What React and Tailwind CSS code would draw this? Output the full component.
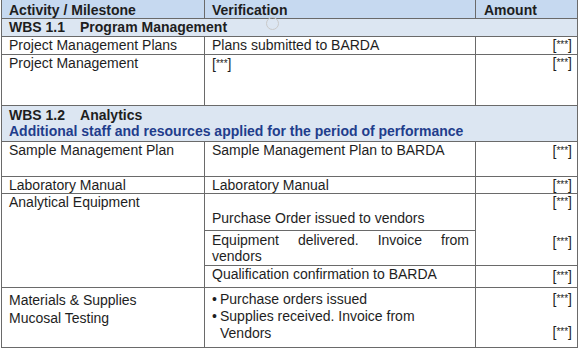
const line = "border-[#6a6a6a]";

function Stars() {
  return (
    <span>
      [<span className="relative -top-[2px] text-[10px]">***</span>]
    </span>
  );
}

function Cell({ className = "", children }) {
  return (
    <div className={`border-r border-b ${line} px-[7px] ${className}`}>
      {children}
    </div>
  );
}

function Amount({ className = "", children }) {
  return (
    <div className={`border-r border-b ${line} pr-[5px] text-right ${className}`}>
      {children}
    </div>
  );
}

export default function App() {
  return (
    <div className="relative h-[350px] w-[579px] overflow-hidden bg-white font-['Liberation_Sans',Arial,sans-serif] text-[14px] leading-[17px] text-[#1e1e1e]">
      <div
        className={`ml-px grid grid-cols-[203px_271px_102px] grid-rows-[19px_18px_18px_51px_36px_35px_17px_37px_35px_22px_60px] border-l ${line}`}
      >
        {/* header */}
        <Cell className="bg-[#c6d9f0] pt-[2px] font-bold">Activity / Milestone</Cell>
        <Cell className="bg-[#c6d9f0] pt-[2px] font-bold">Verification</Cell>
        <div className={`border-r border-b ${line} bg-[#c6d9f0] pl-[8px] pt-[2px] font-bold`}>
          Amount
        </div>

        {/* WBS 1.1 */}
        <Cell className="col-span-3 bg-[#dce6f2] font-bold">
          WBS 1.1<span className="ml-[15px]">Program Management</span>
        </Cell>

        <Cell>Project Management Plans</Cell>
        <Cell>Plans submitted to BARDA</Cell>
        <Amount>
          <Stars />
        </Amount>

        <Cell>Project Management</Cell>
        <Cell className="pt-[1px]">
          <Stars />
        </Cell>
        <Amount>
          <Stars />
        </Amount>

        {/* WBS 1.2 */}
        <Cell className="col-span-3 bg-[#dce6f2] pt-[1px] font-bold leading-[16px]">
          <div>
            WBS 1.2<span className="ml-[15px]">Analytics</span>
          </div>
          <div className="text-[#1f3d8c]">
            Additional staff and resources applied for the period of performance
          </div>
        </Cell>

        <Cell>Sample Management Plan</Cell>
        <Cell>Sample Management Plan to BARDA</Cell>
        <Amount className="pt-[1px]">
          <Stars />
        </Amount>

        <Cell>Laboratory Manual</Cell>
        <Cell>Laboratory Manual</Cell>
        <Amount>
          <Stars />
        </Amount>

        {/* Analytical equipment */}
        <Cell className="row-span-3">Analytical Equipment</Cell>
        <Cell className="pt-[16px]">Purchase Order issued to vendors</Cell>
        <Amount className="row-span-2">
          <div>
            <Stars />
          </div>
          <div className="mt-[22px]">
            <Stars />
          </div>
        </Amount>
        <Cell className="pt-[1px] pr-[6px] text-justify leading-[16px]">
          Equipment delivered. Invoice from vendors
        </Cell>
        <Cell>Qualification confirmation to BARDA</Cell>
        <Amount className="pt-[2px]">
          <Stars />
        </Amount>

        {/* Materials */}
        <Cell className="pt-[3px] leading-[18px]">
          <div>Materials &amp; Supplies</div>
          <div>Mucosal Testing</div>
        </Cell>
        <Cell className="pt-[3px]">
          <div className="flex">
            <span className="w-[8px] shrink-0">•</span>
            <span>Purchase orders issued</span>
          </div>
          <div className="flex">
            <span className="w-[8px] shrink-0">•</span>
            <span>
              Supplies received. Invoice from
              <br />
              Vendors
            </span>
          </div>
        </Cell>
        <Amount className="pt-[3px]">
          <div>
            <Stars />
          </div>
          <div className="mt-[15px]">
            <Stars />
          </div>
        </Amount>
      </div>

      {/* faint scan mark */}
      <div className="absolute left-[266px] top-[17px] h-[13px] w-[13px] rounded-full border border-[#c9c9c9]" />
    </div>
  );
}
